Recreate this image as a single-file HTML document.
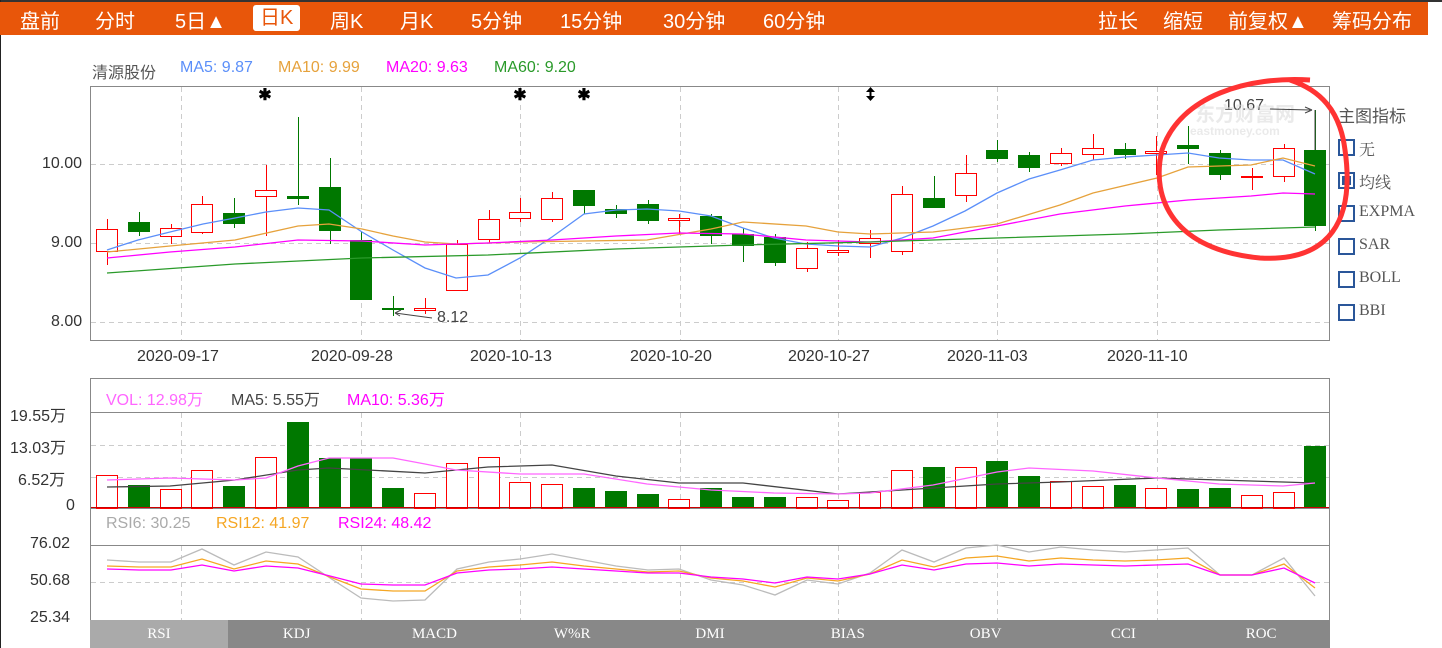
<!DOCTYPE html>
<html><head><meta charset="utf-8"><style>
body{margin:0;width:1442px;height:648px;background:#fff;overflow:hidden;position:relative;font-family:"Liberation Sans","Noto Sans CJK SC",sans-serif}
.top{position:absolute;left:0;top:0;width:1442px;height:2px;background:#333}
.bar{position:absolute;left:0;top:2px;width:1428px;height:33px;background:#e8560a;color:#fff;font-size:20px}
.bar span{position:absolute;top:3px;white-space:nowrap}
.sel{background:#fff;color:#e8560a;padding:0 7px;border-radius:3px;top:3px!important;height:26px;line-height:26px}
.lb{position:absolute;font-size:16px;white-space:nowrap}
.cb{position:absolute;left:1338px;width:13px;height:13px;border:2px solid #2a5699;background:#fff}
.cl{position:absolute;left:1359px;font-family:"Liberation Serif","Noto Serif CJK SC",serif;font-size:16px;color:#555}
.tabs{position:absolute;left:90px;top:620px;width:1240px;height:28px;background:#888;display:flex}
.tabs div{flex:1;color:#fff;text-align:center;line-height:28px;font-family:"Liberation Serif",serif;font-size:15px}
</style></head><body>
<div class="top"></div>
<div style="position:absolute;left:0;top:0;width:1px;height:648px;background:#222"></div>
<div class="bar">
<span style="left:20px">盘前</span><span style="left:95px">分时</span><span style="left:175px">5日▲</span>
<span class="sel" style="left:253px">日K</span><span style="left:330px">周K</span><span style="left:400px">月K</span>
<span style="left:471px">5分钟</span><span style="left:560px">15分钟</span><span style="left:663px">30分钟</span><span style="left:763px">60分钟</span>
<span style="left:1098px">拉长</span><span style="left:1163px">缩短</span><span style="left:1228px">前复权▲</span><span style="left:1332px">筹码分布</span>
</div>
<div class="lb" style="left:92px;top:59px;color:#555">清源股份</div>
<div class="lb" style="left:180px;top:59px;color:#5b8ff9">MA5: 9.87</div>
<div class="lb" style="left:278px;top:59px;color:#e6a23c">MA10: 9.99</div>
<div class="lb" style="left:386px;top:59px;color:#f0f">MA20: 9.63</div>
<div class="lb" style="left:494px;top:59px;color:#2a9a2a">MA60: 9.20</div>
<div class="lb" style="left:42px;top:155px;color:#333">10.00</div>
<div class="lb" style="left:51px;top:234px;color:#333">9.00</div>
<div class="lb" style="left:51px;top:313px;color:#333">8.00</div>
<div class="lb" style="left:137px;top:348px;color:#333">2020-09-17</div>
<div class="lb" style="left:311px;top:348px;color:#333">2020-09-28</div>
<div class="lb" style="left:470px;top:348px;color:#333">2020-10-13</div>
<div class="lb" style="left:630px;top:348px;color:#333">2020-10-20</div>
<div class="lb" style="left:788px;top:348px;color:#333">2020-10-27</div>
<div class="lb" style="left:947px;top:348px;color:#333">2020-11-03</div>
<div class="lb" style="left:1107px;top:348px;color:#333">2020-11-10</div>
<div class="lb" style="left:1338px;top:102px;color:#555;font-size:17px">主图指标</div>
<div class="cb" style="top:139px"></div><div class="cl" style="top:137px">无</div>
<div class="cb" style="top:172px"><div style="margin:2px;width:9px;height:9px;background:#2a5699"></div></div><div class="cl" style="top:170px">均线</div>
<div class="cb" style="top:205px"></div><div class="cl" style="top:203px">EXPMA</div>
<div class="cb" style="top:238px"></div><div class="cl" style="top:236px">SAR</div>
<div class="cb" style="top:271px"></div><div class="cl" style="top:269px">BOLL</div>
<div class="cb" style="top:304px"></div><div class="cl" style="top:302px">BBI</div>
<div class="lb" style="left:106px;top:386px;color:#f6f">VOL: 12.98万</div>
<div class="lb" style="left:231px;top:386px;color:#444">MA5: 5.55万</div>
<div class="lb" style="left:347px;top:386px;color:#f0f">MA10: 5.36万</div>
<div class="lb" style="left:10px;top:402px;color:#333">19.55万</div>
<div class="lb" style="left:10px;top:434px;color:#333">13.03万</div>
<div class="lb" style="left:18px;top:466px;color:#333">6.52万</div>
<div class="lb" style="left:66px;top:497px;color:#333">0</div>
<div class="lb" style="left:106px;top:515px;color:#aaa">RSI6: 30.25</div>
<div class="lb" style="left:216px;top:515px;color:#f5a623">RSI12: 41.97</div>
<div class="lb" style="left:338px;top:515px;color:#f0f">RSI24: 48.42</div>
<div class="lb" style="left:30px;top:535px;color:#333">76.02</div>
<div class="lb" style="left:30px;top:572px;color:#333">50.68</div>
<div class="lb" style="left:30px;top:609px;color:#333">25.34</div>
<div class="lb" style="left:1224px;top:97px;color:#444">10.67</div>
<div class="lb" style="left:437px;top:309px;color:#444">8.12</div>
<div class="lb" style="left:1195px;top:98px;color:#ddd;font-size:20px;font-weight:bold;opacity:.6">东方财富网</div>
<div class="lb" style="left:1190px;top:124px;color:#ddd;font-size:12px;font-weight:bold;opacity:.6">eastmoney.com</div>
<svg id="s" width="1442" height="648" style="position:absolute;left:0;top:0"></svg>
<div class="tabs"><div style="background:#aaa">RSI</div><div>KDJ</div><div>MACD</div><div>W%R</div><div>DMI</div><div>BIAS</div><div>OBV</div><div>CCI</div><div>ROC</div></div>
<script>
var s='';
function R(x,y,w,h,st,f){s+='<rect x="'+x+'" y="'+y+'" width="'+w+'" height="'+h+'" fill="'+(f||'none')+'" stroke="'+(st||'none')+'"/>';}
function L(x1,y1,x2,y2,c,d,w){s+='<line x1="'+x1+'" y1="'+y1+'" x2="'+x2+'" y2="'+y2+'" stroke="'+c+'" stroke-width="'+(w||1)+'"'+(d?' stroke-dasharray="'+d+'"':'')+'/>';}
function P(pts,c){s+='<polyline fill="none" stroke="'+c+'" stroke-width="1.3" points="'+pts.map(p=>p.join(',')).join(' ')+'"/>';}
R(90.5,86.5,1239,254,'#888');R(90.5,378.5,1239,242,'#888');L(90,412.5,1330,412.5,'#888');L(90,508.5,1330,508.5,'#888');L(90,545.5,1330,545.5,'#888');
[181,361,520,680,838,997,1157].forEach(x=>{L(x+.5,87,x+.5,340,'#ccc','5,4');L(x+.5,413,x+.5,508,'#ccc','5,4');L(x+.5,546,x+.5,620,'#ccc','5,4');});
[164,243,322].forEach(y=>L(91,y+.5,1329,y+.5,'#ccc','5,4'));[445,477].forEach(y=>L(91,y+.5,1329,y+.5,'#ccc','5,4'));L(91,582.5,1329,582.5,'#ccc','5,4');
var X=[];for(var i=0;i<39;i++)X.push(Math.round(107+i*31.8));
var C=[[1,229,251,219,265],[0,222,232,212,236],[1,228,236,224,244],[1,204,232,196,234],[0,213,224,198,228],[1,190,196,165,236],[0,196,199,117,205],[0,187,231,158,244],[0,240,300,232,300],[0,308,310,296,316],[1,308,310,298,314],[1,244,290,240,290],[1,219,239,210,243],[1,212,218,198,222],[1,198,219,192,222],[0,190,206,190,214],[0,209,214,205,218],[0,204,221,200,224],[1,218,220,214,234],[0,216,236,214,244],[0,234,246,228,262],[0,237,263,234,266],[1,248,268,242,272],[1,250,252,240,256],[1,238,243,230,258],[1,194,251,186,255],[0,198,208,176,208],[1,173,195,155,202],[0,150,159,140,162],[0,155,168,152,172],[1,153,163,148,166],[1,148,154,134,160],[0,149,155,143,159],[1,151,153,136,175],[0,145,149,126,164],[0,153,175,150,180],[1,176,177,168,190],[1,148,176,144,182],[0,150,226,110,231]];
C.forEach((c,i)=>{var x=X[i],col=c[0]?'#f00':'#007800';L(x+.5,c[3],x+.5,c[1],col);L(x+.5,c[2],x+.5,c[4],col);if(c[0])R(x-10.5,c[1]+.5,21,Math.max(1,c[2]-c[1]),col,'#fff');else R(x-11,c[1],22,Math.max(2,c[2]-c[1]),'none',col);});
P([[107,250],[138,240],[170,232],[203,224],[235,218],[266,212],[298,208],[329,210],[362,232],[393,250],[425,268],[456,278],[488,275],[520,258],[552,237],[584,214],[616,210],[647,209],[679,211],[711,216],[743,228],[774,238],[806,244],[838,246],[870,247],[902,238],[933,226],[965,211],[997,193],[1029,179],[1060,170],[1093,160],[1125,157],[1157,155],[1188,153],[1219,158],[1251,160],[1283,160],[1315,174]],'#5b8ff9');
P([[107,252],[170,246],[235,240],[298,226],[329,224],[362,229],[393,236],[425,242],[456,244],[520,242],[584,241],[647,240],[711,229],[743,222],[806,226],[838,232],[870,234],[933,232],[997,224],[1060,205],[1093,193],[1157,178],[1188,167],[1251,165],[1283,158],[1315,166]],'#e6a23c');
P([[107,258],[170,252],[235,247],[298,240],[362,241],[425,245],[488,243],[552,240],[616,236],[679,233],[743,234],[806,240],[870,242],[933,238],[997,226],[1060,214],[1125,206],[1188,200],[1251,196],[1283,193],[1315,194]],'#f0f');
P([[107,273],[235,264],[362,258],[488,255],[616,249],[743,245],[870,242],[997,238],[1125,234],[1219,230],[1315,227]],'#2a9a2a');
var V=[475,485,489,470,486,457,422,458,458,488,493,463,457,482,484,488,491,494,499,488,497,497,497,500,492,470,467,467,461,476,481,486,485,488,489,488,495,492,446];
V.forEach((v,i)=>{var x=X[i];if(C[i][0])R(x-10.5,v+.5,21,508-v,'#f00','#fff');else R(x-11,v,22,508-v,'none','#007800');});
L(91,507.5,1329,507.5,'#c00');
P([[107,487],[170,486],[235,480],[298,470],[329,468],[425,473],[488,467],[552,465],[616,476],[679,483],[743,483],[838,494],[902,490],[997,484],[1060,482],[1157,478],[1188,479],[1283,482],[1315,483]],'#444');
P([[107,480],[170,478],[235,480],[266,478],[298,466],[329,458],[393,458],[425,464],[456,470],[520,474],[584,474],[647,484],[711,490],[774,493],[838,494],[870,493],[933,485],[997,472],[1029,468],[1093,471],[1157,478],[1219,484],[1283,486],[1315,483]],'#f6f');
var G=[560,562,562,549,565,552,557,578,598,601,600,569,562,559,554,560,566,570,569,580,585,595,580,584,573,550,562,548,545,552,547,550,552,550,548,575,575,558,596];
function rs(k,c){P(G.map((g,i)=>[X[i],Math.round(575+(g-575)*k)]),c);}
rs(1,'#bbb');rs(0.62,'#f5a623');rs(0.4,'#f0f');
L(1270,109,1310,110,'#444');L(1305,107,1312,110,'#444');L(1305,113,1312,110,'#444');L(1315,110,1315,150,'#444');
L(395,313,432,318,'#444');L(395,313,401,310,'#444');L(395,313,400,316,'#444');
[[265,94],[520,94],[584,94]].forEach(p=>{s+='<text x="'+p[0]+'" y="'+(p[1]+6)+'" font-size="16" text-anchor="middle" font-weight="bold">✱</text>';});
L(870.5,89,870.5,99,'#000','',2);s+='<path d="M866,92 L870.5,87 L875,92 Z M866,96 L870.5,101 L875,96 Z" fill="#000"/>';
s+='<path d="M1310,80 C1250,76 1180,95 1162,150 C1150,200 1175,250 1260,258 C1330,262 1355,220 1345,150 C1340,110 1320,90 1290,80" fill="none" stroke="#f33" stroke-width="5"/>';
document.getElementById('s').innerHTML=s;
</script>
</body></html>
